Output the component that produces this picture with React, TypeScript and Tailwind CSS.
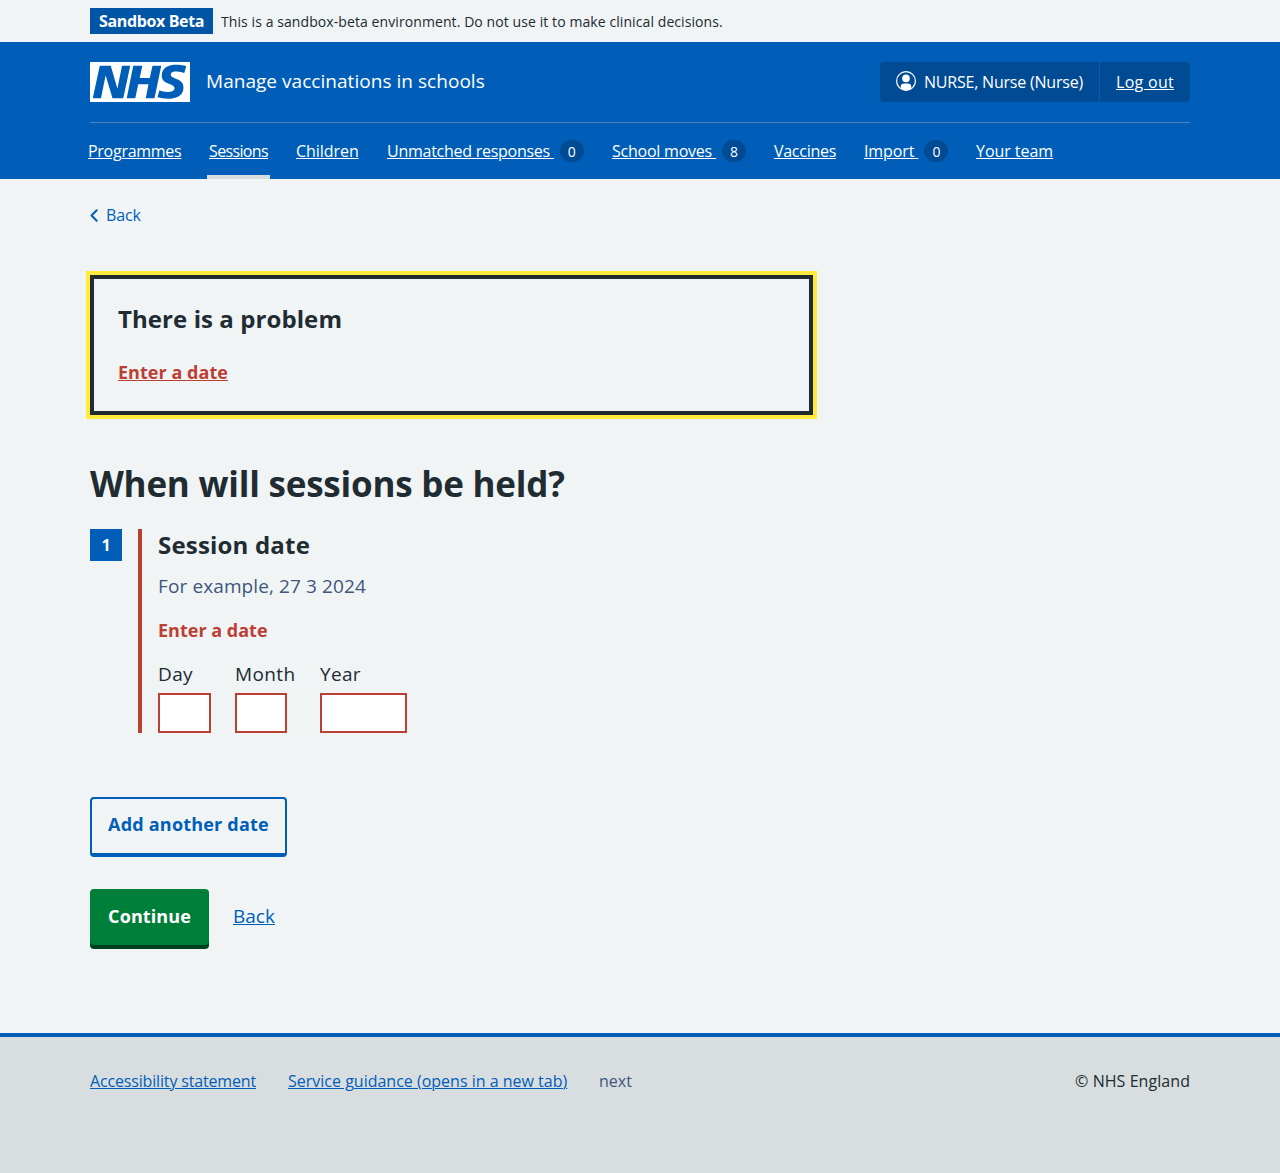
type NavItem = { label: string; box: string; tracking: string; count?: number; current?: boolean };

const navItems: NavItem[] = [
  { label: "Programmes", box: "w-[121px]", tracking: "tracking-[-0.27px]" },
  { label: "Sessions", box: "w-[87px]", tracking: "tracking-[-0.64px]", current: true },
  { label: "Children", box: "w-[91px]", tracking: "tracking-[-0.05px]" },
  { label: "Unmatched responses ", box: "w-[225px]", tracking: "tracking-[-0.26px]", count: 0 },
  { label: "School moves ", box: "w-[162px]", tracking: "tracking-[-0.23px]", count: 8 },
  { label: "Vaccines", box: "w-[90px]", tracking: "tracking-[-0.28px]" },
  { label: "Import ", box: "w-[112px]", tracking: "tracking-[-0.1px]", count: 0 },
  { label: "Your team", box: "w-[90px]", tracking: "tracking-[-0.05px]" },
];

const link = "underline decoration-1 underline-offset-[1px] [text-decoration-skip-ink:auto]";

function NhsLogo() {
  return (
    <svg viewBox="0 0 200 80" className="h-10 w-[100px]" role="img" aria-label="NHS">
      <path
        fill="#fff"
        d="M200 0v80H0V0h200Zm-27.5 5.5c-14.5 0-29 5-29 22 0 10.2 7.7 13.5 14.7 16.3l.7.3c5.4 2 10.1 3.9 10.1 8.4 0 6.5-8.5 7.5-14 7.5s-12.5-1.5-16-3.5L135 70c5.5 2 13.5 3.5 20 3.5 15.5 0 32-4.5 32-22.5 0-19.5-25.5-16.5-25.5-25.5 0-5.5 5.5-6.5 12.5-6.5a35 35 0 0 1 14.5 3l4-13.5c-4.5-2-12-3-20-3Zm-131 2h-22l-14 65H22l9-45h.5l13.5 45h21.5l14-65H64l-9 45h-.5l-13-45Zm63 0h-18l-13 65h17l6-28H117l-5.5 28H129l13.5-65H125L119.5 32h-20l5-24.5Z"
      />
    </svg>
  );
}

function UserIcon() {
  return (
    <svg viewBox="0 0 20 20" className="mb-0.5 size-5" aria-hidden="true">
      <circle cx="10" cy="10" r="9.4" fill="none" stroke="#fff" strokeWidth="1.2" />
      <circle cx="10" cy="7.4" r="3.8" fill="#fff" />
      <path fill="#fff" d="M4.700 17.600v-1.800c0-2.100 1.600-3.200 3.500-3.200h3.600c1.900 0 3.500 1.100 3.500 3.200v1.800a9.400 9.400 0 0 1-10.600 0Z" />
    </svg>
  );
}

function DateField({ label, box, input, tracking }: { label: string; box: string; input: string; tracking: string }) {
  return (
    <label className={`block ${box}`}>
      <span className={`block h-7 text-[19px] leading-7 ${tracking}`}>{label}</span>
      <input type="text" className={`mt-[5px] block h-10 border-2 border-[#bc3f34] bg-white ${input}`} />
    </label>
  );
}

export default function App() {
  return (
    <div className="flex h-[1173px] flex-col bg-[#f0f4f5] font-['Open_Sans',sans-serif] text-base text-[#212b32]">
      <div className="flex h-[42px] items-center px-[90px]">
        <strong className="h-[26px] w-[123px] whitespace-nowrap bg-[#0055a5] pl-[9px] text-base leading-[26px] font-bold tracking-[-0.36px] text-white">
          Sandbox Beta
        </strong>
        <span className="ml-2 pt-0.5 text-sm leading-[26px] tracking-[0.085px]">
          This is a sandbox-beta environment. Do not use it to make clinical decisions.
        </span>
      </div>

      <header className="h-[137px] bg-[#005eb8] px-[90px] text-white">
        <div className="flex h-[81px] items-center justify-between border-b border-[#4d83b8]">
          <div className="flex items-center">
            <NhsLogo />
            <span className="ml-4 pb-0.5 text-[19px] leading-[38px] tracking-[0.04px]">Manage vaccinations in schools</span>
          </div>
          <div className="flex h-10 w-[310px] overflow-hidden rounded bg-[#004b93] leading-10 whitespace-nowrap">
            <div className="flex w-[220px] items-center border-r border-[#005eb8] pl-4">
              <UserIcon />
              <span className="ml-2 tracking-[-0.21px]">NURSE, Nurse (Nurse)</span>
            </div>
            <a href="#" className={`pl-4 tracking-[0.29px] ${link}`}>Log out</a>
          </div>
        </div>
        <nav className="-ml-0.5 flex h-14">
          {navItems.map((item) => (
            <a key={item.label} href="#" className={`relative flex shrink-0 items-center ${item.box}`}>
              <span className={`whitespace-pre ${item.tracking} ${link}`}>{item.label}</span>
              {item.count !== undefined && (
                <span className="ml-1.5 h-[22px] w-6 rounded-full bg-[#004b93] text-center text-sm leading-[23px] font-medium">
                  {item.count}
                </span>
              )}
              {item.current && <span className="absolute bottom-0 -left-0.5 h-1 w-[63px] bg-[#d8dde0]" />}
            </a>
          ))}
        </nav>
      </header>

      <main className="flex-1 px-[90px] pt-6">
        <a href="#" className="flex h-6 items-center text-[#005eb8]">
          <svg viewBox="0 0 8 13" className="h-[13px] w-2" aria-hidden="true">
            <path d="M6.700 1.200 1.500 6.500l5.200 5.300" fill="none" stroke="currentColor" strokeWidth="2" strokeLinecap="round" strokeLinejoin="round" />
          </svg>
          <span className="ml-2 tracking-[-0.1px]">Back</span>
        </a>

        <section className="mt-12 h-[140px] w-[723px] border-4 border-[#212b32] pt-6 pl-6 outline-4 outline-[#ffeb3b]">
          <h2 className="h-8 text-2xl leading-8 font-bold tracking-[0.08px]">There is a problem</h2>
          <a href="#" className={`mt-[23px] block w-fit text-[18px] leading-7 font-bold tracking-[0.04px] text-[#bc3f34] ${link}`}>
            Enter a date
          </a>
        </section>

        <h1 className="mt-11 text-[35px] leading-[50px] font-bold tracking-[-0.22px]">When will sessions be held?</h1>

        <div className="mt-5 flex">
          <span className="size-8 bg-[#005eb8] text-center text-base leading-8 font-bold text-white">1</span>
          <fieldset className="ml-4 h-[204px] border-l-4 border-[#bc3f34] pl-4">
            <h2 className="text-2xl leading-8 font-bold tracking-[0.19px]">Session date</h2>
            <p className="mt-[11px] text-[19px] leading-7 tracking-[0.11px] text-[#3f567c]">For example, 27 3 2024</p>
            <p className="mt-4 text-[18px] leading-7 font-bold tracking-[0.01px] text-[#bc3f34]">Enter a date</p>
            <div className="mt-4 flex">
              <DateField label="Day" box="w-[77px]" input="w-[53px]" tracking="tracking-[0.38px]" />
              <DateField label="Month" box="w-[85px]" input="w-[52px]" tracking="tracking-[0.38px]" />
              <DateField label="Year" box="w-[87px]" input="w-[87px]" tracking="tracking-[0.34px]" />
            </div>
          </fieldset>
        </div>

        <button className="mt-16 block h-[60px] w-[197px] rounded border-2 border-b-4 border-[#005eb8] pb-1 text-[18px] leading-[50px] font-bold tracking-[0.2px] whitespace-nowrap text-[#005eb8]">
          Add another date
        </button>

        <div className="mt-8 flex">
          <button className="h-14 w-[119px] rounded bg-[#007f3b] pb-0.5 text-[18px] leading-[54px] font-bold tracking-[0.1px] text-white shadow-[0_4px_0_#00401e]">
            Continue
          </button>
          <a href="#" className={`ml-6 text-[19px] leading-[54px] text-[#005eb8] ${link}`}>Back</a>
        </div>
      </main>

      <footer className="flex h-[140px] shrink-0 items-start border-t-4 border-[#005eb8] bg-[#d8dde0] px-[90px] pt-8 leading-6">
        <a href="#" className={`w-[198px] tracking-[-0.16px] text-[#005eb8] ${link}`}>Accessibility statement</a>
        <a href="#" className={`w-[311px] text-[#005eb8] ${link}`}>Service guidance (opens in a new tab)</a>
        <span className="text-[#3f567c]">next</span>
        <span className="ml-auto tracking-[0.06px]">© NHS England</span>
      </footer>
    </div>
  );
}
